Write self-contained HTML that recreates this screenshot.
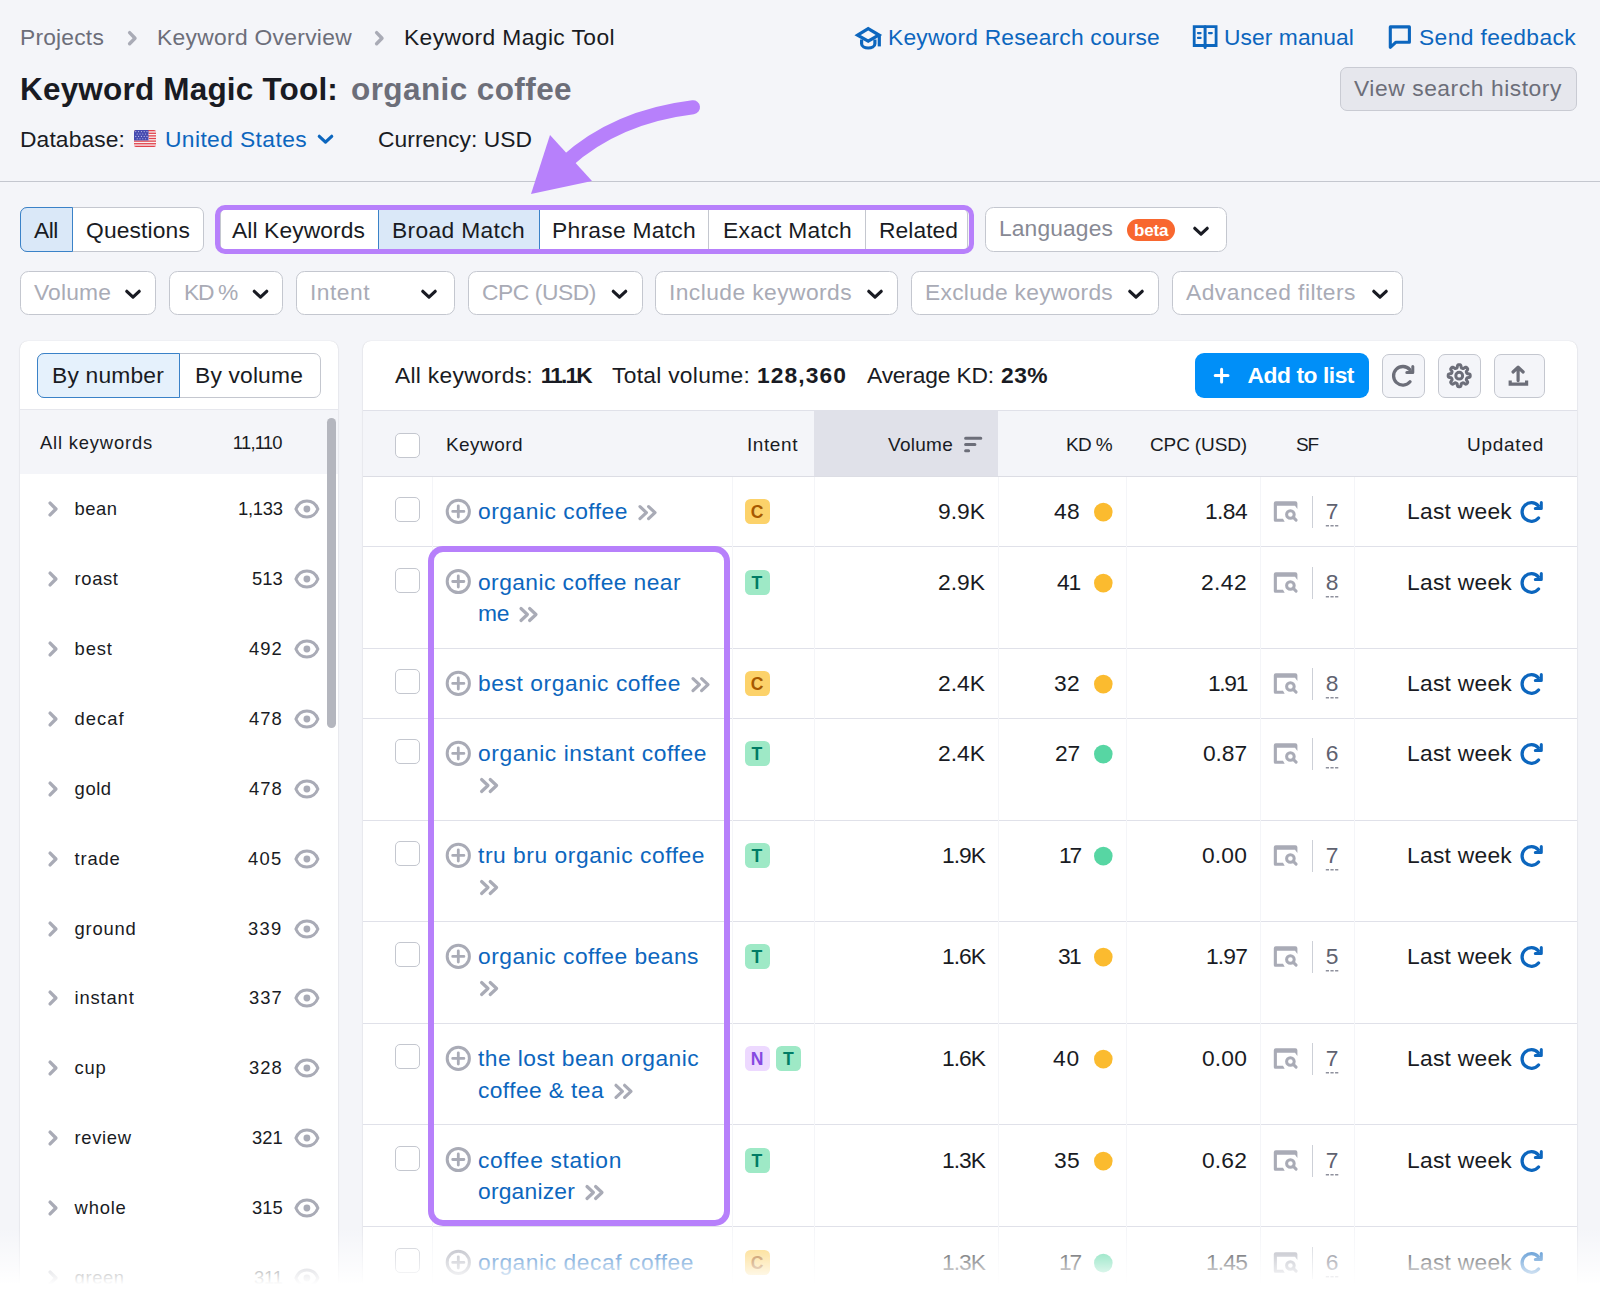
<!DOCTYPE html>
<html lang="en"><head><meta charset="utf-8"><title>Keyword Magic Tool: organic coffee</title>
<style>
html,body{margin:0;padding:0;}
body{width:1600px;height:1303px;overflow:hidden;background:#f4f5f9;font-family:"Liberation Sans",sans-serif;}
#page{position:relative;width:1600px;height:1303px;overflow:hidden;}
.b{position:absolute;box-sizing:border-box;display:block;}
.t{position:absolute;white-space:pre;margin:0;}
</style></head><body><div id="page">
<svg class="b" style="left:134px;top:130px;border-radius:2px;" width="22" height="17" viewBox="0 0 22 17" fill="none"><rect width="22" height="17" rx="1.5" fill="#f7f1f2"/><rect x="0" y="0.00" width="22" height="1.31" fill="#e2434d"/><rect x="0" y="2.62" width="22" height="1.31" fill="#e2434d"/><rect x="0" y="5.23" width="22" height="1.31" fill="#e2434d"/><rect x="0" y="7.85" width="22" height="1.31" fill="#e2434d"/><rect x="0" y="10.46" width="22" height="1.31" fill="#e2434d"/><rect x="0" y="13.08" width="22" height="1.31" fill="#e2434d"/><rect x="0" y="15.69" width="22" height="1.31" fill="#e2434d"/><rect x="0" y="0" width="14.5" height="10.4" fill="#454ab0"/><circle cx="1.8" cy="1.6" r="0.55" fill="#c9cbee"/><circle cx="4.6" cy="1.6" r="0.55" fill="#c9cbee"/><circle cx="7.4" cy="1.6" r="0.55" fill="#c9cbee"/><circle cx="10.2" cy="1.6" r="0.55" fill="#c9cbee"/><circle cx="13.0" cy="1.6" r="0.55" fill="#c9cbee"/><circle cx="3.2" cy="4.0" r="0.55" fill="#c9cbee"/><circle cx="6.0" cy="4.0" r="0.55" fill="#c9cbee"/><circle cx="8.8" cy="4.0" r="0.55" fill="#c9cbee"/><circle cx="11.6" cy="4.0" r="0.55" fill="#c9cbee"/><circle cx="14.4" cy="4.0" r="0.55" fill="#c9cbee"/><circle cx="1.8" cy="6.4" r="0.55" fill="#c9cbee"/><circle cx="4.6" cy="6.4" r="0.55" fill="#c9cbee"/><circle cx="7.4" cy="6.4" r="0.55" fill="#c9cbee"/><circle cx="10.2" cy="6.4" r="0.55" fill="#c9cbee"/><circle cx="13.0" cy="6.4" r="0.55" fill="#c9cbee"/><circle cx="3.2" cy="8.8" r="0.55" fill="#c9cbee"/><circle cx="6.0" cy="8.8" r="0.55" fill="#c9cbee"/><circle cx="8.8" cy="8.8" r="0.55" fill="#c9cbee"/><circle cx="11.6" cy="8.8" r="0.55" fill="#c9cbee"/><circle cx="14.4" cy="8.8" r="0.55" fill="#c9cbee"/></svg>
<div class="b" style="left:1340px;top:67px;width:237px;height:44px;background:#e6e7ed;border:1px solid #c9cbd3;border-radius:7px;"></div>
<div class="b" style="left:0px;top:181px;width:1600px;height:1px;background:#c4c7cf;"></div>
<div class="b" style="left:20px;top:207px;width:184px;height:45px;background:#fff;border:1px solid #c4c7cf;border-radius:7px;"></div>
<div class="b" style="left:20px;top:207px;width:53px;height:45px;background:#dae8f8;border:1px solid #3a82c8;border-radius:7px 0 0 7px;"></div>
<div class="b" style="left:220px;top:208px;width:748px;height:44px;background:#fff;border:1px solid #c4c7cf;border-radius:6px;"></div>
<div class="b" style="left:378px;top:208px;width:162px;height:44px;background:#dae8f8;border:1px solid #3a82c8;"></div>
<div class="b" style="left:708px;top:209px;width:1px;height:42px;background:#c4c7cf;"></div>
<div class="b" style="left:865px;top:209px;width:1px;height:42px;background:#c4c7cf;"></div>
<div class="b" style="left:985px;top:207px;width:242px;height:45px;background:#fff;border:1px solid #c4c7cf;border-radius:8.5px;"></div>
<div class="b" style="left:1127px;top:219px;width:48px;height:22px;background:#f8672f;border-radius:11px;"></div>
<div class="b" style="left:20px;top:271px;width:136px;height:44px;background:#fff;border:1px solid #c4c7cf;border-radius:8.5px;"></div>
<div class="b" style="left:169px;top:271px;width:114px;height:44px;background:#fff;border:1px solid #c4c7cf;border-radius:8.5px;"></div>
<div class="b" style="left:296px;top:271px;width:159px;height:44px;background:#fff;border:1px solid #c4c7cf;border-radius:8.5px;"></div>
<div class="b" style="left:468px;top:271px;width:175px;height:44px;background:#fff;border:1px solid #c4c7cf;border-radius:8.5px;"></div>
<div class="b" style="left:655px;top:271px;width:243px;height:44px;background:#fff;border:1px solid #c4c7cf;border-radius:8.5px;"></div>
<div class="b" style="left:911px;top:271px;width:248px;height:44px;background:#fff;border:1px solid #c4c7cf;border-radius:8.5px;"></div>
<div class="b" style="left:1172px;top:271px;width:231px;height:44px;background:#fff;border:1px solid #c4c7cf;border-radius:8.5px;"></div>
<div class="b" style="left:20px;top:341px;width:318px;height:969px;background:#fff;border-radius:8px 8px 0 0;box-shadow:0 0 1px rgba(25,27,35,.16),0 1px 2px rgba(25,27,35,.12);"></div>
<div class="b" style="left:37px;top:353px;width:284px;height:45px;background:#fff;border:1px solid #c4c7cf;border-radius:7px;"></div>
<div class="b" style="left:37px;top:353px;width:143px;height:45px;background:#e5f1fc;border:1px solid #3a82c8;border-radius:7px 0 0 7px;"></div>
<div class="b" style="left:20px;top:409px;width:318px;height:1px;background:#e6e7ed;"></div>
<div class="b" style="left:20px;top:410px;width:318px;height:64px;background:#f4f5f9;"></div>
<div class="b" style="left:327px;top:418px;width:9px;height:310px;background:#b4b6be;border-radius:4.5px;"></div>
<div class="b" style="left:363px;top:341px;width:1214px;height:969px;background:#fff;border-radius:8px 8px 0 0;box-shadow:0 0 1px rgba(25,27,35,.16),0 1px 2px rgba(25,27,35,.12);"></div>
<div class="b" style="left:1195px;top:353px;width:174px;height:45px;background:#008ff8;border-radius:9px;"></div>
<div class="b" style="left:1382px;top:354px;width:43px;height:44px;background:#f4f5f9;border:1px solid #c4c7cf;border-radius:7px;"></div>
<div class="b" style="left:1438px;top:354px;width:43px;height:44px;background:#f4f5f9;border:1px solid #c4c7cf;border-radius:7px;"></div>
<div class="b" style="left:1494px;top:354px;width:51px;height:44px;background:#f4f5f9;border:1px solid #c4c7cf;border-radius:7px;"></div>
<div class="b" style="left:363px;top:410px;width:1214px;height:1px;background:#e0e1e9;"></div>
<div class="b" style="left:363px;top:411px;width:1214px;height:65px;background:#f4f5f9;"></div>
<div class="b" style="left:814px;top:411px;width:184px;height:65px;background:#e0e1e9;"></div>
<div class="b" style="left:363px;top:476px;width:1214px;height:1px;background:#dcdde4;"></div>
<div class="b" style="left:395px;top:433px;width:25px;height:25px;background:#fff;border:1px solid #c4c7cf;border-radius:5px;"></div>
<div class="b" style="left:363px;top:546px;width:1214px;height:1px;background:#e0e1e9;"></div>
<div class="b" style="left:395px;top:497px;width:25px;height:25px;background:#fff;border:1px solid #c4c7cf;border-radius:5px;"></div>
<div class="b" style="left:744.5px;top:499px;width:25.0px;height:25px;background:#fcd26a;border-radius:5.5px;"></div>
<div class="b" style="left:1312px;top:496px;width:1px;height:32px;background:#cdd0d7;"></div>
<div class="b" style="left:363px;top:648px;width:1214px;height:1px;background:#e0e1e9;"></div>
<div class="b" style="left:395px;top:568px;width:25px;height:25px;background:#fff;border:1px solid #c4c7cf;border-radius:5px;"></div>
<div class="b" style="left:744.5px;top:570px;width:25.0px;height:25px;background:#9ee9c6;border-radius:5.5px;"></div>
<div class="b" style="left:1312px;top:567px;width:1px;height:32px;background:#cdd0d7;"></div>
<div class="b" style="left:363px;top:718px;width:1214px;height:1px;background:#e0e1e9;"></div>
<div class="b" style="left:395px;top:669px;width:25px;height:25px;background:#fff;border:1px solid #c4c7cf;border-radius:5px;"></div>
<div class="b" style="left:744.5px;top:671px;width:25.0px;height:25px;background:#fcd26a;border-radius:5.5px;"></div>
<div class="b" style="left:1312px;top:668px;width:1px;height:32px;background:#cdd0d7;"></div>
<div class="b" style="left:363px;top:820px;width:1214px;height:1px;background:#e0e1e9;"></div>
<div class="b" style="left:395px;top:739px;width:25px;height:25px;background:#fff;border:1px solid #c4c7cf;border-radius:5px;"></div>
<div class="b" style="left:744.5px;top:741px;width:25.0px;height:25px;background:#9ee9c6;border-radius:5.5px;"></div>
<div class="b" style="left:1312px;top:738px;width:1px;height:32px;background:#cdd0d7;"></div>
<div class="b" style="left:363px;top:921px;width:1214px;height:1px;background:#e0e1e9;"></div>
<div class="b" style="left:395px;top:841px;width:25px;height:25px;background:#fff;border:1px solid #c4c7cf;border-radius:5px;"></div>
<div class="b" style="left:744.5px;top:843px;width:25.0px;height:25px;background:#9ee9c6;border-radius:5.5px;"></div>
<div class="b" style="left:1312px;top:840px;width:1px;height:32px;background:#cdd0d7;"></div>
<div class="b" style="left:363px;top:1023px;width:1214px;height:1px;background:#e0e1e9;"></div>
<div class="b" style="left:395px;top:942px;width:25px;height:25px;background:#fff;border:1px solid #c4c7cf;border-radius:5px;"></div>
<div class="b" style="left:744.5px;top:944px;width:25.0px;height:25px;background:#9ee9c6;border-radius:5.5px;"></div>
<div class="b" style="left:1312px;top:941px;width:1px;height:32px;background:#cdd0d7;"></div>
<div class="b" style="left:363px;top:1124px;width:1214px;height:1px;background:#e0e1e9;"></div>
<div class="b" style="left:395px;top:1044px;width:25px;height:25px;background:#fff;border:1px solid #c4c7cf;border-radius:5px;"></div>
<div class="b" style="left:744.5px;top:1046px;width:25.0px;height:25px;background:#edd9ff;border-radius:5.5px;"></div>
<div class="b" style="left:776.0px;top:1046px;width:25.0px;height:25px;background:#9ee9c6;border-radius:5.5px;"></div>
<div class="b" style="left:1312px;top:1043px;width:1px;height:32px;background:#cdd0d7;"></div>
<div class="b" style="left:363px;top:1226px;width:1214px;height:1px;background:#e0e1e9;"></div>
<div class="b" style="left:395px;top:1146px;width:25px;height:25px;background:#fff;border:1px solid #c4c7cf;border-radius:5px;"></div>
<div class="b" style="left:744.5px;top:1148px;width:25.0px;height:25px;background:#9ee9c6;border-radius:5.5px;"></div>
<div class="b" style="left:1312px;top:1145px;width:1px;height:32px;background:#cdd0d7;"></div>
<div class="b" style="left:363px;top:1330px;width:1214px;height:1px;background:#e0e1e9;"></div>
<div class="b" style="left:395px;top:1248px;width:25px;height:25px;background:#fff;border:1px solid #c4c7cf;border-radius:5px;"></div>
<div class="b" style="left:744.5px;top:1250px;width:25.0px;height:25px;background:#fcd26a;border-radius:5.5px;"></div>
<div class="b" style="left:1312px;top:1247px;width:1px;height:32px;background:#cdd0d7;"></div>
<div class="b" style="left:432px;top:477px;width:1px;height:833px;background:#f4f5f8;"></div>
<div class="b" style="left:732px;top:477px;width:1px;height:833px;background:#f4f5f8;"></div>
<div class="b" style="left:814px;top:477px;width:1px;height:833px;background:#f4f5f8;"></div>
<div class="b" style="left:998px;top:477px;width:1px;height:833px;background:#f4f5f8;"></div>
<div class="b" style="left:1126px;top:477px;width:1px;height:833px;background:#f4f5f8;"></div>
<div class="b" style="left:1260px;top:477px;width:1px;height:833px;background:#f4f5f8;"></div>
<div class="b" style="left:1354px;top:477px;width:1px;height:833px;background:#f4f5f8;"></div>
<svg class="b" style="left:0;top:0" width="1600" height="1303" viewBox="0 0 1600 1303" fill="none">
<path d="M129.60 32.60 L135.00 38.20 L129.60 43.80" fill="none" stroke="#a9abb6" stroke-width="3.4" stroke-linecap="round" stroke-linejoin="round"/>
<path d="M376.60 32.60 L382.00 38.20 L376.60 43.80" fill="none" stroke="#a9abb6" stroke-width="3.4" stroke-linecap="round" stroke-linejoin="round"/>
<path d="M857.6 35.2 L868.2 28.7 L879.0 35.0 L868.2 41.2 Z" fill="none" stroke="#0c66be" stroke-width="3.2" stroke-linecap="round" stroke-linejoin="miter"/>
<path d="M879.3 35.2 V46.4" fill="none" stroke="#0c66be" stroke-width="3.2" stroke-linecap="butt" stroke-linejoin="round"/>
<path d="M861.6 39.5 V43.8 C861.6 49.4 874.9 49.4 874.9 43.8 V39.5" fill="none" stroke="#0c66be" stroke-width="3.2" stroke-linecap="butt" stroke-linejoin="round"/>
<path d="M1194.2 26.7 H1216.1 V45.5 H1194.2 Z" fill="none" stroke="#0c66be" stroke-width="2.8" stroke-linecap="round" stroke-linejoin="miter"/>
<path d="M1205.1 26.7 V47.6" fill="none" stroke="#0c66be" stroke-width="3.0" stroke-linecap="round" stroke-linejoin="round"/>
<path d="M1198 33.1 H1200.6 M1198 37.9 H1200.6 M1209 33.1 H1211.8" fill="none" stroke="#0c66be" stroke-width="2.2" stroke-linecap="round" stroke-linejoin="round"/>
<path d="M1390.3 26.9 H1409.4 V42.2 H1396 L1390.3 47.3 Z" fill="none" stroke="#0c66be" stroke-width="3.1" stroke-linecap="round" stroke-linejoin="round"/>
<path d="M319.30 136.30 L325.50 142.14 L331.70 136.30" fill="none" stroke="#0c66be" stroke-width="3.2" stroke-linecap="round" stroke-linejoin="round"/>
<path d="M1194.80 228.30 L1201.00 234.14 L1207.20 228.30" fill="none" stroke="#191b23" stroke-width="3.2" stroke-linecap="round" stroke-linejoin="round"/>
<path d="M126.80 291.30 L133.00 297.14 L139.20 291.30" fill="none" stroke="#191b23" stroke-width="3.2" stroke-linecap="round" stroke-linejoin="round"/>
<path d="M254.30 291.30 L260.50 297.14 L266.70 291.30" fill="none" stroke="#191b23" stroke-width="3.2" stroke-linecap="round" stroke-linejoin="round"/>
<path d="M422.80 291.30 L429.00 297.14 L435.20 291.30" fill="none" stroke="#191b23" stroke-width="3.2" stroke-linecap="round" stroke-linejoin="round"/>
<path d="M613.30 291.30 L619.50 297.14 L625.70 291.30" fill="none" stroke="#191b23" stroke-width="3.2" stroke-linecap="round" stroke-linejoin="round"/>
<path d="M868.80 291.30 L875.00 297.14 L881.20 291.30" fill="none" stroke="#191b23" stroke-width="3.2" stroke-linecap="round" stroke-linejoin="round"/>
<path d="M1129.80 291.30 L1136.00 297.14 L1142.20 291.30" fill="none" stroke="#191b23" stroke-width="3.2" stroke-linecap="round" stroke-linejoin="round"/>
<path d="M1373.80 291.30 L1380.00 297.14 L1386.20 291.30" fill="none" stroke="#191b23" stroke-width="3.2" stroke-linecap="round" stroke-linejoin="round"/>
<path d="M50.10 503.10 L55.90 509.00 L50.10 514.90" fill="none" stroke="#a9abb6" stroke-width="3.4" stroke-linecap="round" stroke-linejoin="round"/>
<path d="M295.90 509.00 C300.08 498.31 313.72 498.31 317.90 509.00 C313.72 519.69 300.08 519.69 295.90 509.00 Z" fill="none" stroke="#a9abb6" stroke-width="3.0" stroke-linecap="round" stroke-linejoin="round"/>
<circle cx="306.9" cy="509" r="3.4" fill="#a9abb6"/>
<path d="M50.10 573.10 L55.90 579.00 L50.10 584.90" fill="none" stroke="#a9abb6" stroke-width="3.4" stroke-linecap="round" stroke-linejoin="round"/>
<path d="M295.90 579.00 C300.08 568.31 313.72 568.31 317.90 579.00 C313.72 589.69 300.08 589.69 295.90 579.00 Z" fill="none" stroke="#a9abb6" stroke-width="3.0" stroke-linecap="round" stroke-linejoin="round"/>
<circle cx="306.9" cy="579" r="3.4" fill="#a9abb6"/>
<path d="M50.10 643.10 L55.90 649.00 L50.10 654.90" fill="none" stroke="#a9abb6" stroke-width="3.4" stroke-linecap="round" stroke-linejoin="round"/>
<path d="M295.90 649.00 C300.08 638.31 313.72 638.31 317.90 649.00 C313.72 659.69 300.08 659.69 295.90 649.00 Z" fill="none" stroke="#a9abb6" stroke-width="3.0" stroke-linecap="round" stroke-linejoin="round"/>
<circle cx="306.9" cy="649" r="3.4" fill="#a9abb6"/>
<path d="M50.10 713.10 L55.90 719.00 L50.10 724.90" fill="none" stroke="#a9abb6" stroke-width="3.4" stroke-linecap="round" stroke-linejoin="round"/>
<path d="M295.90 719.00 C300.08 708.31 313.72 708.31 317.90 719.00 C313.72 729.69 300.08 729.69 295.90 719.00 Z" fill="none" stroke="#a9abb6" stroke-width="3.0" stroke-linecap="round" stroke-linejoin="round"/>
<circle cx="306.9" cy="719" r="3.4" fill="#a9abb6"/>
<path d="M50.10 783.10 L55.90 789.00 L50.10 794.90" fill="none" stroke="#a9abb6" stroke-width="3.4" stroke-linecap="round" stroke-linejoin="round"/>
<path d="M295.90 789.00 C300.08 778.31 313.72 778.31 317.90 789.00 C313.72 799.69 300.08 799.69 295.90 789.00 Z" fill="none" stroke="#a9abb6" stroke-width="3.0" stroke-linecap="round" stroke-linejoin="round"/>
<circle cx="306.9" cy="789" r="3.4" fill="#a9abb6"/>
<path d="M50.10 853.10 L55.90 859.00 L50.10 864.90" fill="none" stroke="#a9abb6" stroke-width="3.4" stroke-linecap="round" stroke-linejoin="round"/>
<path d="M295.90 859.00 C300.08 848.31 313.72 848.31 317.90 859.00 C313.72 869.69 300.08 869.69 295.90 859.00 Z" fill="none" stroke="#a9abb6" stroke-width="3.0" stroke-linecap="round" stroke-linejoin="round"/>
<circle cx="306.9" cy="859" r="3.4" fill="#a9abb6"/>
<path d="M50.10 923.10 L55.90 929.00 L50.10 934.90" fill="none" stroke="#a9abb6" stroke-width="3.4" stroke-linecap="round" stroke-linejoin="round"/>
<path d="M295.90 929.00 C300.08 918.31 313.72 918.31 317.90 929.00 C313.72 939.69 300.08 939.69 295.90 929.00 Z" fill="none" stroke="#a9abb6" stroke-width="3.0" stroke-linecap="round" stroke-linejoin="round"/>
<circle cx="306.9" cy="929" r="3.4" fill="#a9abb6"/>
<path d="M50.10 992.10 L55.90 998.00 L50.10 1003.90" fill="none" stroke="#a9abb6" stroke-width="3.4" stroke-linecap="round" stroke-linejoin="round"/>
<path d="M295.90 998.00 C300.08 987.31 313.72 987.31 317.90 998.00 C313.72 1008.69 300.08 1008.69 295.90 998.00 Z" fill="none" stroke="#a9abb6" stroke-width="3.0" stroke-linecap="round" stroke-linejoin="round"/>
<circle cx="306.9" cy="998" r="3.4" fill="#a9abb6"/>
<path d="M50.10 1062.10 L55.90 1068.00 L50.10 1073.90" fill="none" stroke="#a9abb6" stroke-width="3.4" stroke-linecap="round" stroke-linejoin="round"/>
<path d="M295.90 1068.00 C300.08 1057.31 313.72 1057.31 317.90 1068.00 C313.72 1078.69 300.08 1078.69 295.90 1068.00 Z" fill="none" stroke="#a9abb6" stroke-width="3.0" stroke-linecap="round" stroke-linejoin="round"/>
<circle cx="306.9" cy="1068" r="3.4" fill="#a9abb6"/>
<path d="M50.10 1132.10 L55.90 1138.00 L50.10 1143.90" fill="none" stroke="#a9abb6" stroke-width="3.4" stroke-linecap="round" stroke-linejoin="round"/>
<path d="M295.90 1138.00 C300.08 1127.31 313.72 1127.31 317.90 1138.00 C313.72 1148.69 300.08 1148.69 295.90 1138.00 Z" fill="none" stroke="#a9abb6" stroke-width="3.0" stroke-linecap="round" stroke-linejoin="round"/>
<circle cx="306.9" cy="1138" r="3.4" fill="#a9abb6"/>
<path d="M50.10 1202.10 L55.90 1208.00 L50.10 1213.90" fill="none" stroke="#a9abb6" stroke-width="3.4" stroke-linecap="round" stroke-linejoin="round"/>
<path d="M295.90 1208.00 C300.08 1197.31 313.72 1197.31 317.90 1208.00 C313.72 1218.69 300.08 1218.69 295.90 1208.00 Z" fill="none" stroke="#a9abb6" stroke-width="3.0" stroke-linecap="round" stroke-linejoin="round"/>
<circle cx="306.9" cy="1208" r="3.4" fill="#a9abb6"/>
<path d="M50.10 1272.10 L55.90 1278.00 L50.10 1283.90" fill="none" stroke="#a9abb6" stroke-width="3.4" stroke-linecap="round" stroke-linejoin="round"/>
<path d="M295.90 1278.00 C300.08 1267.31 313.72 1267.31 317.90 1278.00 C313.72 1288.69 300.08 1288.69 295.90 1278.00 Z" fill="none" stroke="#a9abb6" stroke-width="3.0" stroke-linecap="round" stroke-linejoin="round"/>
<circle cx="306.9" cy="1278" r="3.4" fill="#a9abb6"/>
<path d="M1221.6 369.2 V382.0 M1215.2 375.6 H1228.0" fill="none" stroke="#fff" stroke-width="3.0" stroke-linecap="round" stroke-linejoin="round"/>
<path d="M1409.81 369.58 A9.3 9.3 0 1 0 1410.02 381.78" fill="none" stroke="#6c6e79" stroke-width="3.3" stroke-linecap="round" stroke-linejoin="round"/>
<path d="M1412.80 366.40 V372.40 H1406.80" fill="none" stroke="#6c6e79" stroke-width="3.0" stroke-linecap="round" stroke-linejoin="round"/>
<path d="M1412.80 368.80 V372.40 H1409.20 Z" fill="#6c6e79"/>
<path d="M1470.2 375.7 L1470.2 376.1 L1470.1 376.6 L1470.0 377.0 L1469.5 377.3 L1468.5 377.6 L1467.5 377.7 L1467.1 377.9 L1466.8 378.2 L1466.7 378.5 L1466.6 378.8 L1466.5 379.0 L1466.4 379.3 L1466.3 379.7 L1466.5 380.2 L1467.1 381.0 L1467.6 381.8 L1467.7 382.4 L1467.5 382.8 L1467.3 383.2 L1467.0 383.5 L1466.7 383.8 L1466.3 384.0 L1465.9 384.2 L1465.3 384.1 L1464.5 383.6 L1463.7 383.0 L1463.2 382.8 L1462.8 382.9 L1462.5 383.0 L1462.3 383.1 L1462.0 383.2 L1461.7 383.3 L1461.4 383.6 L1461.2 384.0 L1461.1 385.0 L1460.8 386.0 L1460.5 386.5 L1460.1 386.6 L1459.6 386.7 L1459.2 386.7 L1458.8 386.7 L1458.3 386.6 L1457.9 386.5 L1457.6 386.0 L1457.3 385.0 L1457.2 384.0 L1457.0 383.6 L1456.7 383.3 L1456.4 383.2 L1456.1 383.1 L1455.9 383.0 L1455.6 382.9 L1455.2 382.8 L1454.7 383.0 L1453.9 383.6 L1453.1 384.1 L1452.5 384.2 L1452.1 384.0 L1451.7 383.8 L1451.4 383.5 L1451.1 383.2 L1450.9 382.8 L1450.7 382.4 L1450.8 381.8 L1451.3 381.0 L1451.9 380.2 L1452.1 379.7 L1452.0 379.3 L1451.9 379.0 L1451.8 378.8 L1451.7 378.5 L1451.6 378.2 L1451.3 377.9 L1450.9 377.7 L1449.9 377.6 L1448.9 377.3 L1448.4 377.0 L1448.3 376.6 L1448.2 376.1 L1448.2 375.7 L1448.2 375.3 L1448.3 374.8 L1448.4 374.4 L1448.9 374.1 L1449.9 373.8 L1450.9 373.7 L1451.3 373.5 L1451.6 373.2 L1451.7 372.9 L1451.8 372.6 L1451.9 372.4 L1452.0 372.1 L1452.1 371.7 L1451.9 371.2 L1451.3 370.4 L1450.8 369.6 L1450.7 369.0 L1450.9 368.6 L1451.1 368.2 L1451.4 367.9 L1451.7 367.6 L1452.1 367.4 L1452.5 367.2 L1453.1 367.3 L1453.9 367.8 L1454.7 368.4 L1455.2 368.6 L1455.6 368.5 L1455.9 368.4 L1456.1 368.3 L1456.4 368.2 L1456.7 368.1 L1457.0 367.8 L1457.2 367.4 L1457.3 366.4 L1457.6 365.4 L1457.9 364.9 L1458.3 364.8 L1458.8 364.7 L1459.2 364.7 L1459.6 364.7 L1460.1 364.8 L1460.5 364.9 L1460.8 365.4 L1461.1 366.4 L1461.2 367.4 L1461.4 367.8 L1461.7 368.1 L1462.0 368.2 L1462.3 368.3 L1462.5 368.4 L1462.8 368.5 L1463.2 368.6 L1463.7 368.4 L1464.5 367.8 L1465.3 367.3 L1465.9 367.2 L1466.3 367.4 L1466.7 367.6 L1467.0 367.9 L1467.3 368.2 L1467.5 368.6 L1467.7 369.0 L1467.6 369.6 L1467.1 370.4 L1466.5 371.2 L1466.3 371.7 L1466.4 372.1 L1466.5 372.4 L1466.6 372.6 L1466.7 372.9 L1466.8 373.2 L1467.1 373.5 L1467.5 373.7 L1468.5 373.8 L1469.5 374.1 L1470.0 374.4 L1470.1 374.8 L1470.2 375.3 Z" fill="none" stroke="#6c6e79" stroke-width="3.0" stroke-linecap="round" stroke-linejoin="round"/>
<circle cx="1459.2" cy="375.7" r="3.4" stroke="#6c6e79" stroke-width="3.0" fill="none"/>
<path d="M1518.1 380.6 V368.2 M1513.0 372.0 L1518.1 367.3 L1523.2 372.0" fill="none" stroke="#6c6e79" stroke-width="3.2" stroke-linecap="round" stroke-linejoin="round"/>
<path d="M1510.2 380.5 V384.1 H1526.6 V380.5" fill="none" stroke="#6c6e79" stroke-width="3.2" stroke-linecap="butt" stroke-linejoin="miter"/>
<path d="M965.6 438.3 H980.8 M965.6 444.6 H974.9 M965.6 450.8 H968.6" fill="none" stroke="#6c6e79" stroke-width="3.0" stroke-linecap="round" stroke-linejoin="round"/>
<circle cx="458.3" cy="511.4" r="11.1" stroke="#a9abb6" stroke-width="3" fill="none"/>
<path d="M458.3 505.8 V517.0 M452.7 511.4 H463.9" fill="none" stroke="#a9abb6" stroke-width="2.8" stroke-linecap="round" stroke-linejoin="round"/>
<path d="M640.00 506.60 L646.40 512.60 L640.00 518.60" fill="none" stroke="#a9abb6" stroke-width="3.2" stroke-linecap="round" stroke-linejoin="round"/>
<path d="M648.60 506.60 L655.00 512.60 L648.60 518.60" fill="none" stroke="#a9abb6" stroke-width="3.2" stroke-linecap="round" stroke-linejoin="round"/>
<circle cx="1103.3" cy="512.1" r="9.3" fill="#fbbb2f"/>
<path d="M1275.80 501.30 H1295.40 Q1297.40 501.30 1297.40 503.30 V508.90 L1295.00 505.80 H1276.90 V518.70 H1283.00 L1284.70 521.80 H1275.40 Q1273.80 521.80 1273.80 520.20 V503.30 Q1273.80 501.30 1275.80 501.30 Z" fill="#a9abb6"/>
<circle cx="1290.40" cy="514.50" r="3.8" stroke="#a9abb6" stroke-width="3" fill="none"/>
<path d="M1293.30 517.40 L1296.10 520.10" fill="none" stroke="#a9abb6" stroke-width="3.0" stroke-linecap="round" stroke-linejoin="round"/>
<path d="M1325.8 525.8 H1338.3" fill="none" stroke="#8f919d" stroke-width="1.4" stroke-linecap="butt" stroke-linejoin="round" stroke-dasharray="3.2 1.45"/>
<path d="M1538.31 505.78 A9.3 9.3 0 1 0 1538.52 517.98" fill="none" stroke="#0c66be" stroke-width="3.3" stroke-linecap="round" stroke-linejoin="round"/>
<path d="M1541.30 502.60 V508.60 H1535.30" fill="none" stroke="#0c66be" stroke-width="3.0" stroke-linecap="round" stroke-linejoin="round"/>
<path d="M1541.30 505.00 V508.60 H1537.70 Z" fill="#0c66be"/>
<circle cx="458.3" cy="581.5" r="11.1" stroke="#a9abb6" stroke-width="3" fill="none"/>
<path d="M458.3 575.9 V587.1 M452.7 581.5 H463.9" fill="none" stroke="#a9abb6" stroke-width="2.8" stroke-linecap="round" stroke-linejoin="round"/>
<path d="M521.00 608.50 L527.40 614.50 L521.00 620.50" fill="none" stroke="#a9abb6" stroke-width="3.2" stroke-linecap="round" stroke-linejoin="round"/>
<path d="M529.60 608.50 L536.00 614.50 L529.60 620.50" fill="none" stroke="#a9abb6" stroke-width="3.2" stroke-linecap="round" stroke-linejoin="round"/>
<circle cx="1103.3" cy="583.1" r="9.3" fill="#fbbb2f"/>
<path d="M1275.80 572.30 H1295.40 Q1297.40 572.30 1297.40 574.30 V579.90 L1295.00 576.80 H1276.90 V589.70 H1283.00 L1284.70 592.80 H1275.40 Q1273.80 592.80 1273.80 591.20 V574.30 Q1273.80 572.30 1275.80 572.30 Z" fill="#a9abb6"/>
<circle cx="1290.40" cy="585.50" r="3.8" stroke="#a9abb6" stroke-width="3" fill="none"/>
<path d="M1293.30 588.40 L1296.10 591.10" fill="none" stroke="#a9abb6" stroke-width="3.0" stroke-linecap="round" stroke-linejoin="round"/>
<path d="M1325.8 596.8 H1338.3" fill="none" stroke="#8f919d" stroke-width="1.4" stroke-linecap="butt" stroke-linejoin="round" stroke-dasharray="3.2 1.45"/>
<path d="M1538.31 576.78 A9.3 9.3 0 1 0 1538.52 588.98" fill="none" stroke="#0c66be" stroke-width="3.3" stroke-linecap="round" stroke-linejoin="round"/>
<path d="M1541.30 573.60 V579.60 H1535.30" fill="none" stroke="#0c66be" stroke-width="3.0" stroke-linecap="round" stroke-linejoin="round"/>
<path d="M1541.30 576.00 V579.60 H1537.70 Z" fill="#0c66be"/>
<circle cx="458.3" cy="683.4" r="11.1" stroke="#a9abb6" stroke-width="3" fill="none"/>
<path d="M458.3 677.8 V689.0 M452.7 683.4 H463.9" fill="none" stroke="#a9abb6" stroke-width="2.8" stroke-linecap="round" stroke-linejoin="round"/>
<path d="M693.00 678.60 L699.40 684.60 L693.00 690.60" fill="none" stroke="#a9abb6" stroke-width="3.2" stroke-linecap="round" stroke-linejoin="round"/>
<path d="M701.60 678.60 L708.00 684.60 L701.60 690.60" fill="none" stroke="#a9abb6" stroke-width="3.2" stroke-linecap="round" stroke-linejoin="round"/>
<circle cx="1103.3" cy="684.1" r="9.3" fill="#fbbb2f"/>
<path d="M1275.80 673.30 H1295.40 Q1297.40 673.30 1297.40 675.30 V680.90 L1295.00 677.80 H1276.90 V690.70 H1283.00 L1284.70 693.80 H1275.40 Q1273.80 693.80 1273.80 692.20 V675.30 Q1273.80 673.30 1275.80 673.30 Z" fill="#a9abb6"/>
<circle cx="1290.40" cy="686.50" r="3.8" stroke="#a9abb6" stroke-width="3" fill="none"/>
<path d="M1293.30 689.40 L1296.10 692.10" fill="none" stroke="#a9abb6" stroke-width="3.0" stroke-linecap="round" stroke-linejoin="round"/>
<path d="M1325.8 697.8 H1338.3" fill="none" stroke="#8f919d" stroke-width="1.4" stroke-linecap="butt" stroke-linejoin="round" stroke-dasharray="3.2 1.45"/>
<path d="M1538.31 677.78 A9.3 9.3 0 1 0 1538.52 689.98" fill="none" stroke="#0c66be" stroke-width="3.3" stroke-linecap="round" stroke-linejoin="round"/>
<path d="M1541.30 674.60 V680.60 H1535.30" fill="none" stroke="#0c66be" stroke-width="3.0" stroke-linecap="round" stroke-linejoin="round"/>
<path d="M1541.30 677.00 V680.60 H1537.70 Z" fill="#0c66be"/>
<circle cx="458.3" cy="753.4" r="11.1" stroke="#a9abb6" stroke-width="3" fill="none"/>
<path d="M458.3 747.8 V759.0 M452.7 753.4 H463.9" fill="none" stroke="#a9abb6" stroke-width="2.8" stroke-linecap="round" stroke-linejoin="round"/>
<path d="M481.60 779.50 L488.00 785.50 L481.60 791.50" fill="none" stroke="#a9abb6" stroke-width="3.2" stroke-linecap="round" stroke-linejoin="round"/>
<path d="M490.20 779.50 L496.60 785.50 L490.20 791.50" fill="none" stroke="#a9abb6" stroke-width="3.2" stroke-linecap="round" stroke-linejoin="round"/>
<circle cx="1103.3" cy="754.1" r="9.3" fill="#57d6a3"/>
<path d="M1275.80 743.30 H1295.40 Q1297.40 743.30 1297.40 745.30 V750.90 L1295.00 747.80 H1276.90 V760.70 H1283.00 L1284.70 763.80 H1275.40 Q1273.80 763.80 1273.80 762.20 V745.30 Q1273.80 743.30 1275.80 743.30 Z" fill="#a9abb6"/>
<circle cx="1290.40" cy="756.50" r="3.8" stroke="#a9abb6" stroke-width="3" fill="none"/>
<path d="M1293.30 759.40 L1296.10 762.10" fill="none" stroke="#a9abb6" stroke-width="3.0" stroke-linecap="round" stroke-linejoin="round"/>
<path d="M1325.8 767.8 H1338.3" fill="none" stroke="#8f919d" stroke-width="1.4" stroke-linecap="butt" stroke-linejoin="round" stroke-dasharray="3.2 1.45"/>
<path d="M1538.31 747.78 A9.3 9.3 0 1 0 1538.52 759.98" fill="none" stroke="#0c66be" stroke-width="3.3" stroke-linecap="round" stroke-linejoin="round"/>
<path d="M1541.30 744.60 V750.60 H1535.30" fill="none" stroke="#0c66be" stroke-width="3.0" stroke-linecap="round" stroke-linejoin="round"/>
<path d="M1541.30 747.00 V750.60 H1537.70 Z" fill="#0c66be"/>
<circle cx="458.3" cy="855.4" r="11.1" stroke="#a9abb6" stroke-width="3" fill="none"/>
<path d="M458.3 849.8 V861.0 M452.7 855.4 H463.9" fill="none" stroke="#a9abb6" stroke-width="2.8" stroke-linecap="round" stroke-linejoin="round"/>
<path d="M481.60 881.50 L488.00 887.50 L481.60 893.50" fill="none" stroke="#a9abb6" stroke-width="3.2" stroke-linecap="round" stroke-linejoin="round"/>
<path d="M490.20 881.50 L496.60 887.50 L490.20 893.50" fill="none" stroke="#a9abb6" stroke-width="3.2" stroke-linecap="round" stroke-linejoin="round"/>
<circle cx="1103.3" cy="856.1" r="9.3" fill="#57d6a3"/>
<path d="M1275.80 845.30 H1295.40 Q1297.40 845.30 1297.40 847.30 V852.90 L1295.00 849.80 H1276.90 V862.70 H1283.00 L1284.70 865.80 H1275.40 Q1273.80 865.80 1273.80 864.20 V847.30 Q1273.80 845.30 1275.80 845.30 Z" fill="#a9abb6"/>
<circle cx="1290.40" cy="858.50" r="3.8" stroke="#a9abb6" stroke-width="3" fill="none"/>
<path d="M1293.30 861.40 L1296.10 864.10" fill="none" stroke="#a9abb6" stroke-width="3.0" stroke-linecap="round" stroke-linejoin="round"/>
<path d="M1325.8 869.8 H1338.3" fill="none" stroke="#8f919d" stroke-width="1.4" stroke-linecap="butt" stroke-linejoin="round" stroke-dasharray="3.2 1.45"/>
<path d="M1538.31 849.78 A9.3 9.3 0 1 0 1538.52 861.98" fill="none" stroke="#0c66be" stroke-width="3.3" stroke-linecap="round" stroke-linejoin="round"/>
<path d="M1541.30 846.60 V852.60 H1535.30" fill="none" stroke="#0c66be" stroke-width="3.0" stroke-linecap="round" stroke-linejoin="round"/>
<path d="M1541.30 849.00 V852.60 H1537.70 Z" fill="#0c66be"/>
<circle cx="458.3" cy="956.4" r="11.1" stroke="#a9abb6" stroke-width="3" fill="none"/>
<path d="M458.3 950.8 V962.0 M452.7 956.4 H463.9" fill="none" stroke="#a9abb6" stroke-width="2.8" stroke-linecap="round" stroke-linejoin="round"/>
<path d="M481.60 982.50 L488.00 988.50 L481.60 994.50" fill="none" stroke="#a9abb6" stroke-width="3.2" stroke-linecap="round" stroke-linejoin="round"/>
<path d="M490.20 982.50 L496.60 988.50 L490.20 994.50" fill="none" stroke="#a9abb6" stroke-width="3.2" stroke-linecap="round" stroke-linejoin="round"/>
<circle cx="1103.3" cy="957.1" r="9.3" fill="#fbbb2f"/>
<path d="M1275.80 946.30 H1295.40 Q1297.40 946.30 1297.40 948.30 V953.90 L1295.00 950.80 H1276.90 V963.70 H1283.00 L1284.70 966.80 H1275.40 Q1273.80 966.80 1273.80 965.20 V948.30 Q1273.80 946.30 1275.80 946.30 Z" fill="#a9abb6"/>
<circle cx="1290.40" cy="959.50" r="3.8" stroke="#a9abb6" stroke-width="3" fill="none"/>
<path d="M1293.30 962.40 L1296.10 965.10" fill="none" stroke="#a9abb6" stroke-width="3.0" stroke-linecap="round" stroke-linejoin="round"/>
<path d="M1325.8 970.8 H1338.3" fill="none" stroke="#8f919d" stroke-width="1.4" stroke-linecap="butt" stroke-linejoin="round" stroke-dasharray="3.2 1.45"/>
<path d="M1538.31 950.78 A9.3 9.3 0 1 0 1538.52 962.98" fill="none" stroke="#0c66be" stroke-width="3.3" stroke-linecap="round" stroke-linejoin="round"/>
<path d="M1541.30 947.60 V953.60 H1535.30" fill="none" stroke="#0c66be" stroke-width="3.0" stroke-linecap="round" stroke-linejoin="round"/>
<path d="M1541.30 950.00 V953.60 H1537.70 Z" fill="#0c66be"/>
<circle cx="458.3" cy="1058.4" r="11.1" stroke="#a9abb6" stroke-width="3" fill="none"/>
<path d="M458.3 1052.8 V1064.0 M452.7 1058.4 H463.9" fill="none" stroke="#a9abb6" stroke-width="2.8" stroke-linecap="round" stroke-linejoin="round"/>
<path d="M616.00 1085.30 L622.40 1091.30 L616.00 1097.30" fill="none" stroke="#a9abb6" stroke-width="3.2" stroke-linecap="round" stroke-linejoin="round"/>
<path d="M624.60 1085.30 L631.00 1091.30 L624.60 1097.30" fill="none" stroke="#a9abb6" stroke-width="3.2" stroke-linecap="round" stroke-linejoin="round"/>
<circle cx="1103.3" cy="1059.1" r="9.3" fill="#fbbb2f"/>
<path d="M1275.80 1048.30 H1295.40 Q1297.40 1048.30 1297.40 1050.30 V1055.90 L1295.00 1052.80 H1276.90 V1065.70 H1283.00 L1284.70 1068.80 H1275.40 Q1273.80 1068.80 1273.80 1067.20 V1050.30 Q1273.80 1048.30 1275.80 1048.30 Z" fill="#a9abb6"/>
<circle cx="1290.40" cy="1061.50" r="3.8" stroke="#a9abb6" stroke-width="3" fill="none"/>
<path d="M1293.30 1064.40 L1296.10 1067.10" fill="none" stroke="#a9abb6" stroke-width="3.0" stroke-linecap="round" stroke-linejoin="round"/>
<path d="M1325.8 1072.8 H1338.3" fill="none" stroke="#8f919d" stroke-width="1.4" stroke-linecap="butt" stroke-linejoin="round" stroke-dasharray="3.2 1.45"/>
<path d="M1538.31 1052.78 A9.3 9.3 0 1 0 1538.52 1064.98" fill="none" stroke="#0c66be" stroke-width="3.3" stroke-linecap="round" stroke-linejoin="round"/>
<path d="M1541.30 1049.60 V1055.60 H1535.30" fill="none" stroke="#0c66be" stroke-width="3.0" stroke-linecap="round" stroke-linejoin="round"/>
<path d="M1541.30 1052.00 V1055.60 H1537.70 Z" fill="#0c66be"/>
<circle cx="458.3" cy="1159.5" r="11.1" stroke="#a9abb6" stroke-width="3" fill="none"/>
<path d="M458.3 1153.9 V1165.1 M452.7 1159.5 H463.9" fill="none" stroke="#a9abb6" stroke-width="2.8" stroke-linecap="round" stroke-linejoin="round"/>
<path d="M587.00 1186.50 L593.40 1192.50 L587.00 1198.50" fill="none" stroke="#a9abb6" stroke-width="3.2" stroke-linecap="round" stroke-linejoin="round"/>
<path d="M595.60 1186.50 L602.00 1192.50 L595.60 1198.50" fill="none" stroke="#a9abb6" stroke-width="3.2" stroke-linecap="round" stroke-linejoin="round"/>
<circle cx="1103.3" cy="1161.1" r="9.3" fill="#fbbb2f"/>
<path d="M1275.80 1150.30 H1295.40 Q1297.40 1150.30 1297.40 1152.30 V1157.90 L1295.00 1154.80 H1276.90 V1167.70 H1283.00 L1284.70 1170.80 H1275.40 Q1273.80 1170.80 1273.80 1169.20 V1152.30 Q1273.80 1150.30 1275.80 1150.30 Z" fill="#a9abb6"/>
<circle cx="1290.40" cy="1163.50" r="3.8" stroke="#a9abb6" stroke-width="3" fill="none"/>
<path d="M1293.30 1166.40 L1296.10 1169.10" fill="none" stroke="#a9abb6" stroke-width="3.0" stroke-linecap="round" stroke-linejoin="round"/>
<path d="M1325.8 1174.8 H1338.3" fill="none" stroke="#8f919d" stroke-width="1.4" stroke-linecap="butt" stroke-linejoin="round" stroke-dasharray="3.2 1.45"/>
<path d="M1538.31 1154.78 A9.3 9.3 0 1 0 1538.52 1166.98" fill="none" stroke="#0c66be" stroke-width="3.3" stroke-linecap="round" stroke-linejoin="round"/>
<path d="M1541.30 1151.60 V1157.60 H1535.30" fill="none" stroke="#0c66be" stroke-width="3.0" stroke-linecap="round" stroke-linejoin="round"/>
<path d="M1541.30 1154.00 V1157.60 H1537.70 Z" fill="#0c66be"/>
<circle cx="458.3" cy="1262.4" r="11.1" stroke="#a9abb6" stroke-width="3" fill="none"/>
<path d="M458.3 1256.8 V1268.0 M452.7 1262.4 H463.9" fill="none" stroke="#a9abb6" stroke-width="2.8" stroke-linecap="round" stroke-linejoin="round"/>
<path d="M481.60 1288.50 L488.00 1294.50 L481.60 1300.50" fill="none" stroke="#a9abb6" stroke-width="3.2" stroke-linecap="round" stroke-linejoin="round"/>
<path d="M490.20 1288.50 L496.60 1294.50 L490.20 1300.50" fill="none" stroke="#a9abb6" stroke-width="3.2" stroke-linecap="round" stroke-linejoin="round"/>
<circle cx="1103.3" cy="1263.1" r="9.3" fill="#57d6a3"/>
<path d="M1275.80 1252.30 H1295.40 Q1297.40 1252.30 1297.40 1254.30 V1259.90 L1295.00 1256.80 H1276.90 V1269.70 H1283.00 L1284.70 1272.80 H1275.40 Q1273.80 1272.80 1273.80 1271.20 V1254.30 Q1273.80 1252.30 1275.80 1252.30 Z" fill="#a9abb6"/>
<circle cx="1290.40" cy="1265.50" r="3.8" stroke="#a9abb6" stroke-width="3" fill="none"/>
<path d="M1293.30 1268.40 L1296.10 1271.10" fill="none" stroke="#a9abb6" stroke-width="3.0" stroke-linecap="round" stroke-linejoin="round"/>
<path d="M1325.8 1276.8 H1338.3" fill="none" stroke="#8f919d" stroke-width="1.4" stroke-linecap="butt" stroke-linejoin="round" stroke-dasharray="3.2 1.45"/>
<path d="M1538.31 1256.78 A9.3 9.3 0 1 0 1538.52 1268.98" fill="none" stroke="#0c66be" stroke-width="3.3" stroke-linecap="round" stroke-linejoin="round"/>
<path d="M1541.30 1253.60 V1259.60 H1535.30" fill="none" stroke="#0c66be" stroke-width="3.0" stroke-linecap="round" stroke-linejoin="round"/>
<path d="M1541.30 1256.00 V1259.60 H1537.70 Z" fill="#0c66be"/>
</svg>
<div class="t" style="left:20.00px;top:24px;font-size:22.8px;line-height:26px;color:#6c6e79;letter-spacing:0.205px;">Projects</div>
<div class="t" style="left:157.00px;top:24px;font-size:22.8px;line-height:26px;color:#6c6e79;letter-spacing:0.310px;">Keyword Overview</div>
<div class="t" style="left:404.00px;top:24px;font-size:22.8px;line-height:26px;color:#191b23;letter-spacing:0.411px;">Keyword Magic Tool</div>
<div class="t" style="left:888.00px;top:24px;font-size:22.8px;line-height:26px;color:#0c66be;letter-spacing:0.202px;">Keyword Research course</div>
<div class="t" style="left:1224.00px;top:24px;font-size:22.8px;line-height:26px;color:#0c66be;letter-spacing:0.070px;">User manual</div>
<div class="t" style="left:1419.00px;top:24px;font-size:22.8px;line-height:26px;color:#0c66be;letter-spacing:0.376px;">Send feedback</div>
<div class="t" style="left:20.00px;top:71px;font-size:31.5px;line-height:36px;color:#191b23;font-weight:700;letter-spacing:0.188px;">Keyword Magic Tool:</div>
<div class="t" style="left:351.00px;top:71px;font-size:31.5px;line-height:36px;color:#6c6e79;font-weight:700;letter-spacing:0.406px;">organic coffee</div>
<div class="t" style="left:20.00px;top:126px;font-size:22.8px;line-height:26px;color:#191b23;letter-spacing:0.120px;">Database:</div>
<div class="t" style="left:165.00px;top:126px;font-size:22.8px;line-height:26px;color:#0c66be;letter-spacing:0.395px;">United States</div>
<div class="t" style="left:378.00px;top:126px;font-size:22.8px;line-height:26px;color:#191b23;letter-spacing:0.055px;">Currency: USD</div>
<div class="t" style="left:1354.00px;top:75px;font-size:22.8px;line-height:26px;color:#6c6e79;letter-spacing:0.566px;">View search history</div>
<div class="t" style="left:34.00px;top:217px;font-size:22.8px;line-height:26px;color:#191b23;letter-spacing:-0.448px;">All</div>
<div class="t" style="left:86.00px;top:217px;font-size:22.8px;line-height:26px;color:#191b23;letter-spacing:0.149px;">Questions</div>
<div class="t" style="left:232.00px;top:217px;font-size:22.8px;line-height:26px;color:#191b23;letter-spacing:0.103px;">All Keywords</div>
<div class="t" style="left:392.00px;top:217px;font-size:22.8px;line-height:26px;color:#191b23;letter-spacing:0.341px;">Broad Match</div>
<div class="t" style="left:552.00px;top:217px;font-size:22.8px;line-height:26px;color:#191b23;letter-spacing:0.279px;">Phrase Match</div>
<div class="t" style="left:723.00px;top:217px;font-size:22.8px;line-height:26px;color:#191b23;letter-spacing:0.324px;">Exact Match</div>
<div class="t" style="left:879.00px;top:217px;font-size:22.8px;line-height:26px;color:#191b23;letter-spacing:0.060px;">Related</div>
<div class="t" style="left:999.00px;top:215px;font-size:22.8px;line-height:26px;color:#878994;letter-spacing:0.130px;">Languages</div>
<div class="t" style="left:1133.95px;top:221px;font-size:17px;line-height:19px;color:#fff;font-weight:700;letter-spacing:-0.117px;">beta</div>
<div class="t" style="left:34.00px;top:279px;font-size:22.8px;line-height:26px;color:#a9abb6;letter-spacing:0.159px;">Volume</div>
<div class="t" style="left:184.00px;top:279px;font-size:22.8px;line-height:26px;color:#a9abb6;letter-spacing:-1.320px;">KD %</div>
<div class="t" style="left:310.00px;top:279px;font-size:22.8px;line-height:26px;color:#a9abb6;letter-spacing:0.492px;">Intent</div>
<div class="t" style="left:482.00px;top:279px;font-size:22.8px;line-height:26px;color:#a9abb6;letter-spacing:-0.420px;">CPC (USD)</div>
<div class="t" style="left:669.00px;top:279px;font-size:22.8px;line-height:26px;color:#a9abb6;letter-spacing:0.429px;">Include keywords</div>
<div class="t" style="left:925.00px;top:279px;font-size:22.8px;line-height:26px;color:#a9abb6;letter-spacing:0.267px;">Exclude keywords</div>
<div class="t" style="left:1186.00px;top:279px;font-size:22.8px;line-height:26px;color:#a9abb6;letter-spacing:0.487px;">Advanced filters</div>
<div class="t" style="left:52.00px;top:362px;font-size:22.8px;line-height:26px;color:#191b23;letter-spacing:0.196px;">By number</div>
<div class="t" style="left:195.00px;top:362px;font-size:22.8px;line-height:26px;color:#191b23;letter-spacing:0.174px;">By volume</div>
<div class="t" style="left:40.00px;top:432px;font-size:18.4px;line-height:21px;color:#191b23;letter-spacing:0.814px;">All keywords</div>
<div class="t" style="left:232.80px;top:432px;font-size:18.4px;line-height:21px;color:#191b23;letter-spacing:-0.755px;">11,110</div>
<div class="t" style="left:74.60px;top:498px;font-size:18.4px;line-height:21px;color:#191b23;letter-spacing:0.520px;">bean</div>
<div class="t" style="left:238.10px;top:498px;font-size:18.4px;line-height:21px;color:#191b23;letter-spacing:-0.306px;">1,133</div>
<div class="t" style="left:74.60px;top:568px;font-size:18.4px;line-height:21px;color:#191b23;letter-spacing:0.622px;">roast</div>
<div class="t" style="left:252.10px;top:568px;font-size:18.4px;line-height:21px;color:#191b23;letter-spacing:-0.062px;">513</div>
<div class="t" style="left:74.60px;top:638px;font-size:18.4px;line-height:21px;color:#191b23;letter-spacing:0.809px;">best</div>
<div class="t" style="left:249.10px;top:638px;font-size:18.4px;line-height:21px;color:#191b23;letter-spacing:0.938px;">492</div>
<div class="t" style="left:74.60px;top:708px;font-size:18.4px;line-height:21px;color:#191b23;letter-spacing:1.000px;">decaf</div>
<div class="t" style="left:249.10px;top:708px;font-size:18.4px;line-height:21px;color:#191b23;letter-spacing:0.938px;">478</div>
<div class="t" style="left:74.60px;top:778px;font-size:18.4px;line-height:21px;color:#191b23;letter-spacing:0.555px;">gold</div>
<div class="t" style="left:249.10px;top:778px;font-size:18.4px;line-height:21px;color:#191b23;letter-spacing:0.938px;">478</div>
<div class="t" style="left:74.60px;top:848px;font-size:18.4px;line-height:21px;color:#191b23;letter-spacing:0.816px;">trade</div>
<div class="t" style="left:248.10px;top:848px;font-size:18.4px;line-height:21px;color:#191b23;letter-spacing:1.271px;">405</div>
<div class="t" style="left:74.60px;top:918px;font-size:18.4px;line-height:21px;color:#191b23;letter-spacing:0.789px;">ground</div>
<div class="t" style="left:248.10px;top:918px;font-size:18.4px;line-height:21px;color:#191b23;letter-spacing:1.271px;">339</div>
<div class="t" style="left:74.60px;top:987px;font-size:18.4px;line-height:21px;color:#191b23;letter-spacing:0.830px;">instant</div>
<div class="t" style="left:249.10px;top:987px;font-size:18.4px;line-height:21px;color:#191b23;letter-spacing:0.938px;">337</div>
<div class="t" style="left:74.60px;top:1057px;font-size:18.4px;line-height:21px;color:#191b23;letter-spacing:0.781px;">cup</div>
<div class="t" style="left:249.10px;top:1057px;font-size:18.4px;line-height:21px;color:#191b23;letter-spacing:0.938px;">328</div>
<div class="t" style="left:74.60px;top:1127px;font-size:18.4px;line-height:21px;color:#191b23;letter-spacing:0.641px;">review</div>
<div class="t" style="left:252.10px;top:1127px;font-size:18.4px;line-height:21px;color:#191b23;letter-spacing:-0.062px;">321</div>
<div class="t" style="left:74.60px;top:1197px;font-size:18.4px;line-height:21px;color:#191b23;letter-spacing:0.787px;">whole</div>
<div class="t" style="left:252.10px;top:1197px;font-size:18.4px;line-height:21px;color:#191b23;letter-spacing:-0.062px;">315</div>
<div class="t" style="left:74.60px;top:1267px;font-size:18.4px;line-height:21px;color:#191b23;letter-spacing:0.591px;">green</div>
<div class="t" style="left:254.10px;top:1267px;font-size:18.4px;line-height:21px;color:#191b23;letter-spacing:-0.276px;">311</div>
<div class="t" style="left:395.00px;top:362px;font-size:22.8px;line-height:26px;color:#191b23;letter-spacing:0.285px;">All keywords:</div>
<div class="t" style="left:540.70px;top:362px;font-size:22.8px;line-height:26px;color:#191b23;font-weight:700;letter-spacing:-1.856px;">11.1K</div>
<div class="t" style="left:612.00px;top:362px;font-size:22.8px;line-height:26px;color:#191b23;letter-spacing:0.284px;">Total volume:</div>
<div class="t" style="left:757.00px;top:362px;font-size:22.8px;line-height:26px;color:#191b23;font-weight:700;letter-spacing:1.085px;">128,360</div>
<div class="t" style="left:867.00px;top:362px;font-size:22.8px;line-height:26px;color:#191b23;letter-spacing:-0.168px;">Average KD:</div>
<div class="t" style="left:1001.00px;top:362px;font-size:22.8px;line-height:26px;color:#191b23;font-weight:700;letter-spacing:0.453px;">23%</div>
<div class="t" style="left:1247.60px;top:362px;font-size:22.8px;line-height:26px;color:#fff;font-weight:700;letter-spacing:-0.458px;">Add to list</div>
<div class="t" style="left:446.00px;top:434px;font-size:19.0px;line-height:21px;color:#191b23;letter-spacing:0.440px;">Keyword</div>
<div class="t" style="left:747.00px;top:434px;font-size:19.0px;line-height:21px;color:#191b23;letter-spacing:0.576px;">Intent</div>
<div class="t" style="left:888.00px;top:434px;font-size:19.0px;line-height:21px;color:#191b23;letter-spacing:0.271px;">Volume</div>
<div class="t" style="left:1066.00px;top:434px;font-size:19.0px;line-height:21px;color:#191b23;letter-spacing:-0.645px;">KD %</div>
<div class="t" style="left:1150.00px;top:434px;font-size:19.0px;line-height:21px;color:#191b23;letter-spacing:-0.130px;">CPC (USD)</div>
<div class="t" style="left:1296.00px;top:434px;font-size:19.0px;line-height:21px;color:#191b23;letter-spacing:-1.141px;">SF</div>
<div class="t" style="left:1467.00px;top:434px;font-size:19.0px;line-height:21px;color:#191b23;letter-spacing:0.737px;">Updated</div>
<div class="t" style="left:478.00px;top:498px;font-size:22.8px;line-height:26px;color:#0c66be;letter-spacing:0.515px;">organic coffee</div>
<div class="t" style="left:750.64px;top:502px;font-size:17.6px;line-height:20px;color:#a75800;font-weight:700;">C</div>
<div class="t" style="left:938.00px;top:498px;font-size:22.8px;line-height:26px;color:#191b23;letter-spacing:0.023px;">9.9K</div>
<div class="t" style="left:1054.00px;top:498px;font-size:22.8px;line-height:26px;color:#191b23;letter-spacing:0.320px;">48</div>
<div class="t" style="left:1205.00px;top:498px;font-size:22.8px;line-height:26px;color:#191b23;letter-spacing:-0.594px;">1.84</div>
<div class="t" style="left:1325.66px;top:498px;font-size:22.8px;line-height:26px;color:#5f6270;">7</div>
<div class="t" style="left:1407.00px;top:498px;font-size:22.8px;line-height:26px;color:#191b23;letter-spacing:0.260px;">Last week</div>
<div class="t" style="left:478.00px;top:569px;font-size:22.8px;line-height:26px;color:#0c66be;letter-spacing:0.433px;">organic coffee near</div>
<div class="t" style="left:478.00px;top:600px;font-size:22.8px;line-height:26px;color:#0c66be;letter-spacing:-0.336px;">me</div>
<div class="t" style="left:751.62px;top:573px;font-size:17.6px;line-height:20px;color:#007c65;font-weight:700;">T</div>
<div class="t" style="left:938.00px;top:569px;font-size:22.8px;line-height:26px;color:#191b23;letter-spacing:0.023px;">2.9K</div>
<div class="t" style="left:1057.00px;top:569px;font-size:22.8px;line-height:26px;color:#191b23;letter-spacing:-1.180px;">41</div>
<div class="t" style="left:1201.00px;top:569px;font-size:22.8px;line-height:26px;color:#191b23;letter-spacing:0.406px;">2.42</div>
<div class="t" style="left:1325.66px;top:569px;font-size:22.8px;line-height:26px;color:#5f6270;">8</div>
<div class="t" style="left:1407.00px;top:569px;font-size:22.8px;line-height:26px;color:#191b23;letter-spacing:0.260px;">Last week</div>
<div class="t" style="left:478.00px;top:670px;font-size:22.8px;line-height:26px;color:#0c66be;letter-spacing:0.567px;">best organic coffee</div>
<div class="t" style="left:750.64px;top:674px;font-size:17.6px;line-height:20px;color:#a75800;font-weight:700;">C</div>
<div class="t" style="left:938.00px;top:670px;font-size:22.8px;line-height:26px;color:#191b23;letter-spacing:0.023px;">2.4K</div>
<div class="t" style="left:1054.00px;top:670px;font-size:22.8px;line-height:26px;color:#191b23;letter-spacing:0.320px;">32</div>
<div class="t" style="left:1208.00px;top:670px;font-size:22.8px;line-height:26px;color:#191b23;letter-spacing:-1.344px;">1.91</div>
<div class="t" style="left:1325.66px;top:670px;font-size:22.8px;line-height:26px;color:#5f6270;">8</div>
<div class="t" style="left:1407.00px;top:670px;font-size:22.8px;line-height:26px;color:#191b23;letter-spacing:0.260px;">Last week</div>
<div class="t" style="left:478.00px;top:740px;font-size:22.8px;line-height:26px;color:#0c66be;letter-spacing:0.577px;">organic instant coffee</div>
<div class="t" style="left:751.62px;top:744px;font-size:17.6px;line-height:20px;color:#007c65;font-weight:700;">T</div>
<div class="t" style="left:938.00px;top:740px;font-size:22.8px;line-height:26px;color:#191b23;letter-spacing:0.023px;">2.4K</div>
<div class="t" style="left:1055.00px;top:740px;font-size:22.8px;line-height:26px;color:#191b23;letter-spacing:-0.180px;">27</div>
<div class="t" style="left:1203.00px;top:740px;font-size:22.8px;line-height:26px;color:#191b23;letter-spacing:-0.094px;">0.87</div>
<div class="t" style="left:1325.66px;top:740px;font-size:22.8px;line-height:26px;color:#5f6270;">6</div>
<div class="t" style="left:1407.00px;top:740px;font-size:22.8px;line-height:26px;color:#191b23;letter-spacing:0.260px;">Last week</div>
<div class="t" style="left:478.00px;top:842px;font-size:22.8px;line-height:26px;color:#0c66be;letter-spacing:0.545px;">tru bru organic coffee</div>
<div class="t" style="left:751.62px;top:846px;font-size:17.6px;line-height:20px;color:#007c65;font-weight:700;">T</div>
<div class="t" style="left:942.00px;top:842px;font-size:22.8px;line-height:26px;color:#191b23;letter-spacing:-0.977px;">1.9K</div>
<div class="t" style="left:1059.00px;top:842px;font-size:22.8px;line-height:26px;color:#191b23;letter-spacing:-2.180px;">17</div>
<div class="t" style="left:1202.00px;top:842px;font-size:22.8px;line-height:26px;color:#191b23;letter-spacing:0.156px;">0.00</div>
<div class="t" style="left:1325.66px;top:842px;font-size:22.8px;line-height:26px;color:#5f6270;">7</div>
<div class="t" style="left:1407.00px;top:842px;font-size:22.8px;line-height:26px;color:#191b23;letter-spacing:0.260px;">Last week</div>
<div class="t" style="left:478.00px;top:943px;font-size:22.8px;line-height:26px;color:#0c66be;letter-spacing:0.487px;">organic coffee beans</div>
<div class="t" style="left:751.62px;top:947px;font-size:17.6px;line-height:20px;color:#007c65;font-weight:700;">T</div>
<div class="t" style="left:942.00px;top:943px;font-size:22.8px;line-height:26px;color:#191b23;letter-spacing:-0.977px;">1.6K</div>
<div class="t" style="left:1058.00px;top:943px;font-size:22.8px;line-height:26px;color:#191b23;letter-spacing:-1.680px;">31</div>
<div class="t" style="left:1206.00px;top:943px;font-size:22.8px;line-height:26px;color:#191b23;letter-spacing:-0.844px;">1.97</div>
<div class="t" style="left:1325.66px;top:943px;font-size:22.8px;line-height:26px;color:#5f6270;">5</div>
<div class="t" style="left:1407.00px;top:943px;font-size:22.8px;line-height:26px;color:#191b23;letter-spacing:0.260px;">Last week</div>
<div class="t" style="left:478.00px;top:1045px;font-size:22.8px;line-height:26px;color:#0c66be;letter-spacing:0.445px;">the lost bean organic</div>
<div class="t" style="left:478.00px;top:1077px;font-size:22.8px;line-height:26px;color:#0c66be;letter-spacing:0.395px;">coffee &amp; tea</div>
<div class="t" style="left:750.64px;top:1049px;font-size:17.6px;line-height:20px;color:#8649e1;font-weight:700;">N</div>
<div class="t" style="left:783.12px;top:1049px;font-size:17.6px;line-height:20px;color:#007c65;font-weight:700;">T</div>
<div class="t" style="left:942.00px;top:1045px;font-size:22.8px;line-height:26px;color:#191b23;letter-spacing:-0.977px;">1.6K</div>
<div class="t" style="left:1053.00px;top:1045px;font-size:22.8px;line-height:26px;color:#191b23;letter-spacing:0.820px;">40</div>
<div class="t" style="left:1202.00px;top:1045px;font-size:22.8px;line-height:26px;color:#191b23;letter-spacing:0.156px;">0.00</div>
<div class="t" style="left:1325.66px;top:1045px;font-size:22.8px;line-height:26px;color:#5f6270;">7</div>
<div class="t" style="left:1407.00px;top:1045px;font-size:22.8px;line-height:26px;color:#191b23;letter-spacing:0.260px;">Last week</div>
<div class="t" style="left:478.00px;top:1147px;font-size:22.8px;line-height:26px;color:#0c66be;letter-spacing:0.628px;">coffee station</div>
<div class="t" style="left:478.00px;top:1178px;font-size:22.8px;line-height:26px;color:#0c66be;letter-spacing:0.217px;">organizer</div>
<div class="t" style="left:751.62px;top:1151px;font-size:17.6px;line-height:20px;color:#007c65;font-weight:700;">T</div>
<div class="t" style="left:942.00px;top:1147px;font-size:22.8px;line-height:26px;color:#191b23;letter-spacing:-0.977px;">1.3K</div>
<div class="t" style="left:1054.00px;top:1147px;font-size:22.8px;line-height:26px;color:#191b23;letter-spacing:0.320px;">35</div>
<div class="t" style="left:1202.00px;top:1147px;font-size:22.8px;line-height:26px;color:#191b23;letter-spacing:0.156px;">0.62</div>
<div class="t" style="left:1325.66px;top:1147px;font-size:22.8px;line-height:26px;color:#5f6270;">7</div>
<div class="t" style="left:1407.00px;top:1147px;font-size:22.8px;line-height:26px;color:#191b23;letter-spacing:0.260px;">Last week</div>
<div class="t" style="left:478.00px;top:1249px;font-size:22.8px;line-height:26px;color:#0c66be;letter-spacing:0.555px;">organic decaf coffee</div>
<div class="t" style="left:750.64px;top:1253px;font-size:17.6px;line-height:20px;color:#a75800;font-weight:700;">C</div>
<div class="t" style="left:942.00px;top:1249px;font-size:22.8px;line-height:26px;color:#191b23;letter-spacing:-0.977px;">1.3K</div>
<div class="t" style="left:1059.00px;top:1249px;font-size:22.8px;line-height:26px;color:#191b23;letter-spacing:-2.180px;">17</div>
<div class="t" style="left:1206.00px;top:1249px;font-size:22.8px;line-height:26px;color:#191b23;letter-spacing:-0.844px;">1.45</div>
<div class="t" style="left:1325.66px;top:1249px;font-size:22.8px;line-height:26px;color:#5f6270;">6</div>
<div class="t" style="left:1407.00px;top:1249px;font-size:22.8px;line-height:26px;color:#191b23;letter-spacing:0.260px;">Last week</div>
<div class="b" style="left:215px;top:205px;width:759px;height:49px;border:5px solid #b780fb;border-radius:10px;"></div>
<svg class="b" style="left:500px;top:80px" width="300" height="140" viewBox="500 80 300 140" fill="none"><path d="M693 107.3 C 638 114, 598 133, 566 162" stroke="#b780fb" stroke-width="14" stroke-linecap="round"/><path d="M550 135 L592 181 L531 194 Z" fill="#b780fb"/></svg>
<div class="b" style="left:427.7px;top:546.2px;width:302.2px;height:680px;border:6.4px solid #b780fb;border-radius:15px;"></div>
<div class="b" style="left:0;top:1226px;width:1600px;height:77px;background:linear-gradient(to bottom,rgba(255,255,255,0) 2%,rgba(255,255,255,.55) 44%,#fff 76%,#fff 100%);"></div>
</div></body></html>
